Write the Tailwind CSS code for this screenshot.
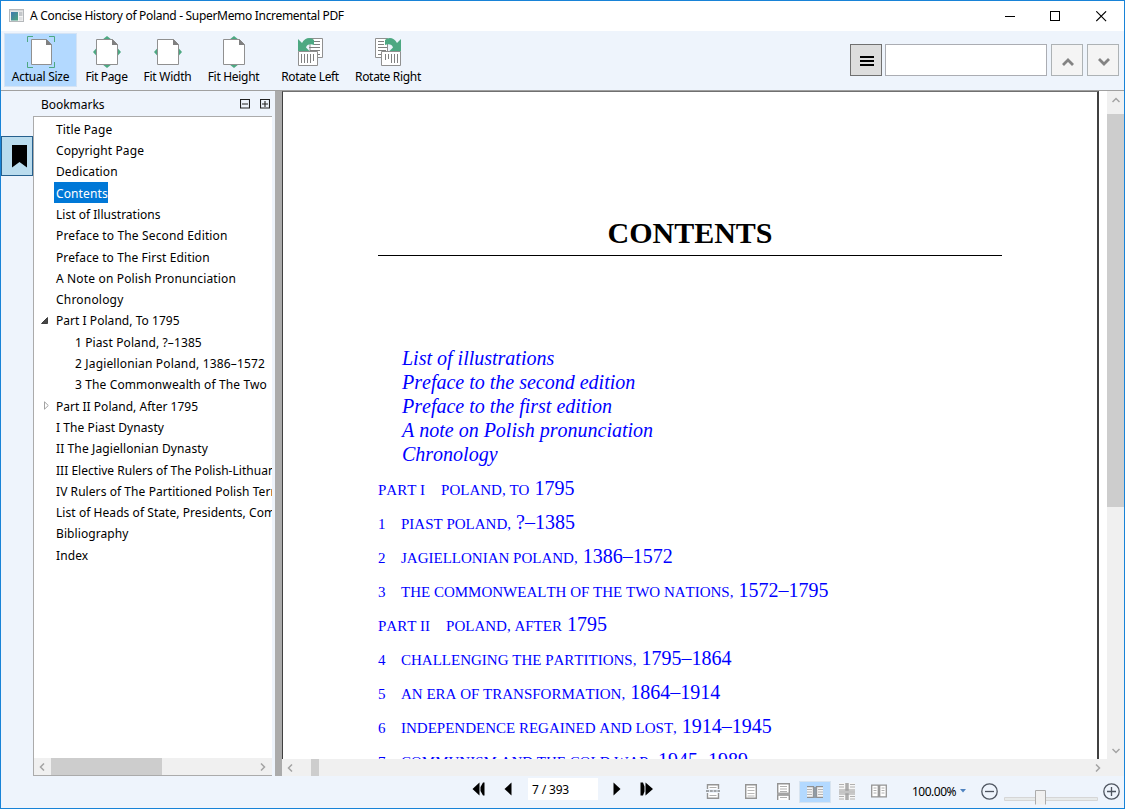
<!DOCTYPE html>
<html lang="en">
<head>
<meta charset="utf-8">
<title>A Concise History of Poland - SuperMemo Incremental PDF</title>
<script src="https://cdn.jsdelivr.net/npm/@tailwindcss/browser@4"></script>
</head>
<body class="w-[1125px] h-[809px] overflow-hidden">
<div class="w-[1125px] h-[809px] border border-[#1883d7] bg-[#eef4fc] flex flex-col overflow-hidden text-black text-[12px] whitespace-nowrap font-['Noto_Sans','Open_Sans',sans-serif]">

  <!-- Title bar -->
  <header class="h-[30px] shrink-0 bg-white flex items-center pl-2">
    <svg class="w-[15px] h-[13px] shrink-0 -mt-[2px]" viewBox="0 0 15 13"><defs><linearGradient id="g" x1="0" y1="0" x2="1" y2="1"><stop offset="0" stop-color="#3f78b0"/><stop offset="1" stop-color="#4ea57c"/></linearGradient></defs><rect x=".5" y=".5" width="14" height="12" fill="#f4f4f4" stroke="#b5b8bb"/><rect x="1" y="1" width="13" height="1.500" fill="#d5d7d9"/><rect x="2" y="3" width="7" height="8.500" fill="url(#g)"/><rect x="10" y="3" width="3.500" height="4" fill="#c4c7ca"/><rect x="10" y="8" width="3.500" height="3.500" fill="#dfe1e3"/></svg>
    <span class="ml-[6px] tracking-[-0.31px]">A Concise History of Poland - SuperMemo Incremental PDF</span>
    <div class="ml-auto flex items-center pr-[17px] gap-[34px]">
      <svg class="w-[11px] h-[11px]" viewBox="0 0 11 11"><path d="M0 5.500h10" stroke="#000"/></svg>
      <svg class="w-[11px] h-[11px]" viewBox="0 0 11 11"><rect x=".5" y=".5" width="9" height="9" fill="none" stroke="#000"/></svg>
      <svg class="w-[11px] h-[11px] ml-[1px]" viewBox="0 0 11 11"><path d="M.3 .3l9.800 9.800M10.100 .3l-9.800 9.800" stroke="#000" stroke-width="1.100"/></svg>
    </div>
  </header>

  <!-- Toolbar -->
  <nav class="h-[60px] shrink-0 border-b border-[#a0a0a0] flex pt-[2px] pl-[3px]">
    <button class="w-[73px] h-[54px] bg-[#b3d9ff] border border-[#d4e3f5] flex flex-col items-center pt-[2px]">
      <svg class="w-[28px] h-[32px]" viewBox="0 0 28 32"><path d="M.5 6V.5H6M22 .5h5.500V6M27.500 26v5.500H22M6 31.500H.5V26" fill="none" stroke="#4da882"/><path d="M4.500 3.500h15l5 5v20h-20z" fill="#fff" stroke="#909090"/><path d="M19 3l6 6h-6z" fill="#808080"/></svg>
      <span class="leading-[18px] tracking-[-0.25px]">Actual Size</span>
    </button>
    <button class="w-[59px] h-[54px] flex flex-col items-center pt-[3px]">
      <svg class="w-[28px] h-[32px]" viewBox="0 0 28 32"><path d="M14 0l5 4H9zM14 32l5-4H9zM0 16l4-4.500v9zM28 16l-4-4.500v9z" fill="#4da882"/><path d="M3.500 3.500h16l5 5v20h-21z" fill="#fff" stroke="#909090"/><path d="M19 3l6 6h-6z" fill="#808080"/></svg>
      <span class="leading-[18px] tracking-[-0.35px]">Fit Page</span>
    </button>
    <button class="w-[63px] h-[54px] flex flex-col items-center pt-[3px]">
      <svg class="w-[28px] h-[32px]" viewBox="0 0 28 32"><path d="M0 16l4-4.500v9zM28 16l-4-4.500v9z" fill="#4da882"/><path d="M3.500 3.500h16l5 5v20h-21z" fill="#fff" stroke="#909090"/><path d="M19 3l6 6h-6z" fill="#808080"/></svg>
      <span class="leading-[18px] tracking-[-0.25px]">Fit Width</span>
    </button>
    <button class="w-[69px] h-[54px] flex flex-col items-center pt-[3px]">
      <svg class="w-[28px] h-[32px]" viewBox="0 0 28 32"><path d="M14 0l5 4H9zM14 32l5-4H9z" fill="#4da882"/><path d="M3.500 3.500h16l5 5v20h-21z" fill="#fff" stroke="#909090"/><path d="M19 3l6 6h-6z" fill="#808080"/></svg>
      <span class="leading-[18px] tracking-[-0.3px]">Fit Height</span>
    </button>
    <button class="w-[84px] h-[54px] flex flex-col items-center pt-[3px]">
      <svg class="w-[28px] h-[32px]" viewBox="0 0 28 32"><path d="M14 2.500h12.500v19H14z" fill="#fff" stroke="#909090"/><path d="M18 5.500h6M18 8.500h6M13 11.500h11M14 14.500h10M21 18.500h3" stroke="#808080"/><path d="M2 3l4 4C9 1 15 1 18 4v5c-4-1.500-7-.5-8 2.500l4 4H2z" fill="#4da882"/><path d="M2.500 15.500h19v14h-19z" fill="#fff" stroke="#909090"/><path d="M5.500 18v9M8.500 18v9M11.500 18v9M14.500 18v9M17.500 18v7" stroke="#808080"/></svg>
      <span class="leading-[18px] tracking-[-0.35px]">Rotate Left</span>
    </button>
    <button class="w-[72px] h-[54px] flex flex-col items-center pt-[3px]">
      <svg class="w-[28px] h-[32px]" viewBox="0 0 28 32"><path d="M1.500 2.500h12v19h-12z" fill="#fff" stroke="#909090"/><path d="M4 5.500h6M4 8.500h6M4 11.500h9M4 14.500h8M4 18.500h3" stroke="#808080"/><path d="M27 3l-4 4C20 1 14 1 11 4v5c4-1.500 7-.5 8 2.500l-4 4h12z" fill="#4da882"/><path d="M7.500 15.500h19v14h-19z" fill="#fff" stroke="#909090"/><path d="M11.500 18v6M14.500 18v5M17.500 18v9M20.500 18v9M23.500 18v9" stroke="#808080"/></svg>
      <span class="leading-[18px] tracking-[-0.31px]">Rotate Right</span>
    </button>
    <div class="ml-auto mt-[11px] mr-[5px] h-8 flex">
      <button class="w-8 h-8 mr-[3px] bg-[#dddddd] border border-[#707070] flex items-center justify-center"><svg class="w-[14px] h-[10px] mt-[2px] ml-[2px]" viewBox="0 0 14 10"><path d="M0 1h14M0 5h14M0 9h14" stroke="#000" stroke-width="2"/></svg></button>
      <div class="w-[162px] h-8 bg-white border border-[#abadb3] mr-1"></div>
      <button class="w-8 h-8 mr-1 bg-[#f4f4f4] border border-[#adb2b5] flex items-center justify-center"><svg class="w-[14px] h-[10px] mt-[3px] ml-[2px]" viewBox="0 0 14 10"><path d="M2 8l5-5 5 5" fill="none" stroke="#838383" stroke-width="2.800"/></svg></button>
      <button class="w-8 h-8 bg-[#f4f4f4] border border-[#adb2b5] flex items-center justify-center"><svg class="w-[14px] h-[10px] mt-[3px] ml-[2px]" viewBox="0 0 14 10"><path d="M2 2l5 5 5-5" fill="none" stroke="#838383" stroke-width="2.800"/></svg></button>
    </div>
  </nav>

  <!-- Workspace -->
  <main class="h-[685px] shrink-0 flex">
    <aside class="w-8 pt-[45px] shrink-0">
      <button class="w-8 h-10 bg-[#badcee] border border-[#26608e] flex justify-center pt-2 pl-[5px]"><svg class="w-[16px] h-[23px]" viewBox="0 0 16 23"><path d="M0 0h15v22.500l-7.500-5.500L0 22.500z"/></svg></button>
    </aside>
    <section class="w-[239px] shrink-0 flex flex-col">
      <div class="h-[25px] shrink-0 flex items-center pl-2 pr-[2px]">
        <span class="tracking-[-0.03px] pt-[2px]">Bookmarks</span>
        <svg class="ml-auto w-[10px] h-[10px]" viewBox="0 0 10 10"><path d="M.5 .5h9v8.500h-9zM2 5h6" fill="none" stroke="#222" stroke-width="1.100"/></svg>
        <svg class="ml-[10px] w-[10px] h-[10px]" viewBox="0 0 10 10"><path d="M.5 .5h9v8.500h-9zM2 5h6M5 2v6" fill="none" stroke="#222" stroke-width="1.100"/></svg>
      </div>
      <div class="h-[660px] border-t border-l border-b border-[#ababab] bg-white flex flex-col">
        <ul class="flex-1 overflow-hidden pt-[1.800px] leading-[21.3px] pl-[22px] tracking-[0.11px]">
          <li class="h-[21.3px]">Title Page</li>
          <li class="h-[21.3px]">Copyright Page</li>
          <li class="h-[21.3px]">Dedication</li>
          <li class="h-[21.3px] flex"><span class="bg-[#0078d7] text-white w-[54px] h-[21px] -mt-[1px] pt-[1px] -ml-[2px] pl-[2px]">Contents</span></li>
          <li class="h-[21.3px] tracking-[0.02px]">List of Illustrations</li>
          <li class="h-[21.3px] tracking-[0.14px]">Preface to The Second Edition</li>
          <li class="h-[21.3px]">Preface to The First Edition</li>
          <li class="h-[21.3px] tracking-[0.155px]">A Note on Polish Pronunciation</li>
          <li class="h-[21.3px] tracking-[0.2px]">Chronology</li>
          <li class="h-[21.3px] flex items-center tracking-[0.04px]"><svg class="w-[7px] h-[7px] -ml-[15px] mr-[8px] -mt-[1px]" viewBox="0 0 7 7"><path d="M6.500 .5v6h-6z" fill="#484848" stroke="#262626" stroke-width=".8"/></svg>Part I Poland, To 1795</li>
          <li class="h-[21.3px] pl-[19px]">1 Piast Poland, ?–1385</li>
          <li class="h-[21.3px] pl-[19px] tracking-[0.16px]">2 Jagiellonian Poland, 1386–1572</li>
          <li class="h-[21.3px] pl-[19px] tracking-[0.12px]">3 The Commonwealth of The Two</li>
          <li class="h-[21.3px] flex items-center tracking-[0.02px]"><svg class="w-[5px] h-[9px] -ml-[12px] mr-[7px] -mt-[1px]" viewBox="0 0 5 9"><path d="M.5 .8v7.400L4.300 4.500z" fill="#fff" stroke="#989898" stroke-width=".9"/></svg>Part II Poland, After 1795</li>
          <li class="h-[21.3px] tracking-[0.07px]">I The Piast Dynasty</li>
          <li class="h-[21.3px]">II The Jagiellonian Dynasty</li>
          <li class="h-[21.3px] w-[216px] overflow-hidden tracking-[0.02px]">III Elective Rulers of The Polish-Lithuan</li>
          <li class="h-[21.3px] w-[216px] overflow-hidden tracking-[0.07px]">IV Rulers of The Partitioned Polish Terri</li>
          <li class="h-[21.3px] w-[216px] overflow-hidden tracking-[0.06px]">List of Heads of State, Presidents, Com</li>
          <li class="h-[21.3px] tracking-[0.085px]">Bibliography</li>
          <li class="h-[21.3px]">Index</li>
        </ul>
        <div class="h-[17px] bg-[#f0f0f0] flex items-center pl-[5px] pr-[6px]">
          <svg class="w-[6px] h-[8px]" viewBox="0 0 6 8"><path d="M5 .5L1.500 4 5 7.500" fill="none" stroke="#a3a3a3" stroke-width="1.500"/></svg>
          <div class="ml-[6px] w-[111px] h-full bg-[#cdcdcd]"></div>
          <svg class="ml-auto w-[6px] h-[8px]" viewBox="0 0 6 8"><path d="M1 .5L4.500 4 1 7.500" fill="none" stroke="#a3a3a3" stroke-width="1.500"/></svg>
        </div>
      </div>
    </section>
    <div class="w-[7px] ml-[3px] shrink-0 bg-[#ababab]"></div>
    <section class="w-[842px] shrink-0 flex flex-col">
      <div class="h-[668px] flex bg-white">
        <article class="w-[817px] h-full overflow-hidden border-t border-t-[#707070] border-l border-l-[#404040] border-r-2 border-r-[#404040] pl-[95px] pr-[95px] font-['Liberation_Serif','Times_New_Roman',serif] [font-kerning:none] text-[20px] text-[#0000ff]">
          <h1 class="mt-[120px] h-[44px] w-[624px] border-b border-black text-center text-[30px] leading-[42px] font-bold text-black">CONTENTS</h1>
          <div class="mt-[90px] pl-6 italic leading-6">
            <p>List of illustrations</p><p>Preface to the second edition</p><p>Preface to the first edition</p><p>A note on Polish pronunciation</p><p>Chronology</p>
          </div>
          <div class="mt-[5px] leading-[34px]">
            <p class="h-[34px]"><span class="text-[15px] mr-4">PART I</span><span class="text-[15px]">POLAND, TO</span> 1795</p>
            <p class="h-[34px]"><span class="text-[15px] inline-block w-[23px]">1</span><span class="text-[15px]">PIAST POLAND,</span> ?–1385</p>
            <p class="h-[34px]"><span class="text-[15px] inline-block w-[23px]">2</span><span class="text-[15px]">JAGIELLONIAN POLAND,</span> 1386–1572</p>
            <p class="h-[34px]"><span class="text-[15px] inline-block w-[23px]">3</span><span class="text-[15px]">THE COMMONWEALTH OF THE TWO NATIONS,</span> 1572–1795</p>
            <p class="h-[34px]"><span class="text-[15px] mr-4">PART II</span><span class="text-[15px]">POLAND, AFTER</span> 1795</p>
            <p class="h-[34px]"><span class="text-[15px] inline-block w-[23px]">4</span><span class="text-[15px]">CHALLENGING THE PARTITIONS,</span> 1795–1864</p>
            <p class="h-[34px]"><span class="text-[15px] inline-block w-[23px]">5</span><span class="text-[15px]">AN ERA OF TRANSFORMATION,</span> 1864–1914</p>
            <p class="h-[34px]"><span class="text-[15px] inline-block w-[23px]">6</span><span class="text-[15px]">INDEPENDENCE REGAINED AND LOST,</span> 1914–1945</p>
            <p class="h-[34px]"><span class="text-[15px] inline-block w-[23px]">7</span><span class="text-[15px]">COMMUNISM AND THE COLD WAR,</span> 1945–1989</p>
          </div>
        </article>
        <div class="ml-auto w-[17px] bg-[#f0f0f0] flex flex-col items-center">
          <svg class="w-[8px] h-[6px] mt-[6px] mb-[11px] shrink-0" viewBox="0 0 8 6"><path d="M.5 5L4 1.500 7.500 5" fill="none" stroke="#a3a3a3" stroke-width="1.500"/></svg>
          <div class="w-full h-[393px] shrink-0 bg-[#cdcdcd]"></div>
          <svg class="w-[8px] h-[6px] mt-auto mb-[5px] shrink-0" viewBox="0 0 8 6"><path d="M.5 1L4 4.500 7.500 1" fill="none" stroke="#a3a3a3" stroke-width="1.500"/></svg>
        </div>
      </div>
      <div class="h-[17px] bg-[#f0f0f0] flex items-center pl-[5px] pr-[23px]">
        <svg class="w-[6px] h-[8px]" viewBox="0 0 6 8"><path d="M5 .5L1.500 4 5 7.500" fill="none" stroke="#a3a3a3" stroke-width="1.500"/></svg>
        <div class="ml-[18px] w-[8px] h-full bg-[#cdcdcd]"></div>
        <svg class="ml-auto w-[6px] h-[8px]" viewBox="0 0 6 8"><path d="M1 .5L4.500 4 1 7.500" fill="none" stroke="#a3a3a3" stroke-width="1.500"/></svg>
      </div>
    </section>
  </main>

  <!-- Status bar -->
  <footer class="h-8 shrink-0 flex items-start">
    <svg class="ml-[471px] mt-[6px] w-[14px] h-[14px]" viewBox="0 0 14 14"><path d="M7.500 .5v13L.5 7zM12.500 .5v13h-1.500L8.500 9V5L11 .5z"/></svg>
    <svg class="ml-[18px] mt-[6px] w-[8px] h-[14px]" viewBox="0 0 8 14"><path d="M7.500 .5v13L.5 7z"/></svg>
    <div class="ml-4 mt-[2px] w-[70px] h-[22px] bg-white leading-[24px] pl-1 tracking-[-0.16px]">7 / 393</div>
    <svg class="ml-[15px] mt-[6px] w-[8px] h-[14px]" viewBox="0 0 8 14"><path d="M.5 .5v13L7.500 7z"/></svg>
    <svg class="ml-[19px] mt-[6px] w-[14px] h-[14px]" viewBox="0 0 14 14"><path d="M.5 .5H3l1.500 4v5l-1.500 4H.5zM5.500 .5v13L13 7z"/></svg>
    <svg class="ml-[52px] mt-[8px] w-[14px] h-[15px]" viewBox="0 0 14 15"><path d="M1.500 5V.8h11V5M1.500 9v5.200h11V9" fill="#fff" stroke="#949494" stroke-width="1.400"/><path d="M3.500 3.500h7M3.500 11.500h7" stroke="#b0b0b0"/><path d="M0 7h14" stroke="#a0a4a8" stroke-width="1.800" stroke-dasharray="3 .8"/></svg>
    <svg class="ml-[25px] mt-[8px] w-[12px] h-[15px]" viewBox="0 0 12 15"><path d="M.7 .7h10.600v13.600H.7z" fill="#fff" stroke="#949494" stroke-width="1.400"/><path d="M2.500 3.500h7M2.500 6.500h7M2.500 9.500h7M2.500 12h7" stroke="#b8b8b8"/></svg>
    <svg class="ml-[20px] mt-[7px] w-[13px] h-[17px]" viewBox="0 0 13 17"><path d="M.7 17v-5h11.600v5M.7 .7h11.600v9.800H.7z" fill="#fff" stroke="#949494" stroke-width="1.400"/><path d="M3 3.500h7M3 6h7M3 8.500h7M3 14.500h7" stroke="#b0b0b0"/><path d="M0 11h13" stroke="#a4a4a4" stroke-width="2.500"/></svg>
    <div class="ml-[9px] mt-[5px] w-8 h-[22px] bg-[#b3d9ff] border border-[#d8e4f0] flex justify-center pt-[4px]"><svg class="w-[16px] h-[12px]" viewBox="0 0 16 12"><path d="M0 .7h6.500v10.600H0M16 .7H9.500v10.600H16" fill="#f4f4f4" stroke="#909090" stroke-width="1.300"/><path d="M0 3.500h5M0 6h5M0 8.500h5M11 3.500h5M11 6h5M11 8.500h5" stroke="#b4b4b4"/><path d="M8 1v11" stroke="#909ba5" stroke-width="3"/></svg></div>
    <svg class="ml-[8px] mt-[7px] w-[16px] h-[17px]" viewBox="0 0 16 17"><path d="M0 0h16v17H0z" fill="#f6f6f6"/><path d="M0 1.500h5M0 4h5M0 13.500h5M0 16h5M11 1.500h5M11 4h5M11 13.500h5M11 16h5" stroke="#b0b0b0"/><path d="M8 0v17" stroke="#adadad" stroke-width="3.500"/><path d="M0 7h16M0 11h16" stroke="#9c9c9c" stroke-width="1.200"/><path d="M0 9h16" stroke="#c4c4c4" stroke-width="2.500"/></svg>
    <svg class="ml-[16px] mt-[8px] w-[16px] h-[14px]" viewBox="0 0 16 14"><path d="M.7 1.200h6.600v11.600H.7zM8.700 1.200h6.600v11.600H8.700z" fill="#fff" stroke="#949494" stroke-width="1.300"/><path d="M2.500 4h3M2.500 6.500h3M2.500 9h3M10.500 4h3M10.500 6.500h3M10.500 9h3" stroke="#b0b0b0"/></svg>
    <span class="ml-[25px] mt-[8px] w-[44px] leading-4 tracking-[-0.5px]">100.00%</span>
    <svg class="ml-[4px] mt-[13px] w-[6px] h-[4px]" viewBox="0 0 6 4"><path d="M0 0h6L3 3.500z" fill="#4f83c0"/></svg>
    <svg class="ml-[15px] mt-[7px] w-[17px] h-[17px]" viewBox="0 0 17 17"><circle cx="8.500" cy="8.500" r="7.700" fill="none" stroke="#4e5560" stroke-width="1.300"/><path d="M4 8.500h9" stroke="#4e5560" stroke-width="1.300"/></svg>
    <svg class="ml-[6px] mt-[14px] w-[94px] h-[15px]" viewBox="0 0 94 15"><path d="M.5 7.500h93v3H.5z" fill="#e7eaea" stroke="#d6d6d6"/><path d="M31.500 14.500V.5h10v14" fill="#f0f0f0" stroke="#acacac"/></svg>
    <svg class="ml-[5px] mt-[7px] w-[17px] h-[17px]" viewBox="0 0 17 17"><circle cx="8.500" cy="8.500" r="7.700" fill="none" stroke="#4e5560" stroke-width="1.300"/><path d="M4 8.500h9M8.500 4v9" stroke="#4e5560" stroke-width="1.300"/></svg>
  </footer>
</div>
</body>
</html>
